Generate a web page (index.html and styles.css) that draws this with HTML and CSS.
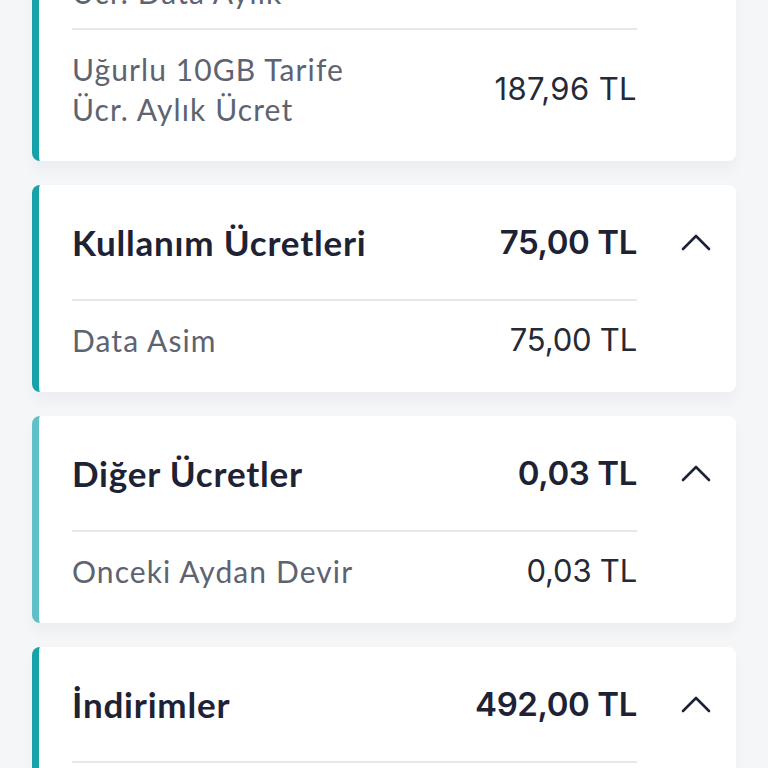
FILE: index.html
```html
<!DOCTYPE html>
<html lang="tr">
<head>
<meta charset="utf-8">
<title>Fatura Detayı</title>
<link rel="stylesheet" href="styles.css">
</head>
<body>
<div class="list">
  <section class="card">
    <div class="main">
      <div class="row"><span class="label">Uğurlu Data<br>Ücr. Data Aylık</span><span class="amount">0,00 TL</span></div>
      <div class="divider"></div>
      <div class="row"><span class="label">Uğurlu 10GB Tarife<br>Ücr. Aylık Ücret</span><span class="amount wide">187,96 TL</span></div>
    </div>
    <div class="side"></div>
  </section>

  <section class="card">
    <div class="main">
      <div class="head"><span class="title">Kullanım Ücretleri</span><span class="total">75,00 TL</span></div>
      <div class="divider"></div>
      <div class="row"><span class="label">Data Asim</span><span class="amount">75,00 TL</span></div>
    </div>
    <div class="side">
      <svg class="chev" width="30" height="18" viewBox="0 0 30 18"><polyline points="2,16 15,3 28,16" fill="none" stroke="#1d2235" stroke-width="2.6" stroke-linecap="round" stroke-linejoin="round"/></svg>
    </div>
  </section>

  <section class="card light">
    <div class="main">
      <div class="head"><span class="title">Diğer Ücretler</span><span class="total">0,03 TL</span></div>
      <div class="divider"></div>
      <div class="row"><span class="label">Onceki Aydan Devir</span><span class="amount">0,03 TL</span></div>
    </div>
    <div class="side">
      <svg class="chev" width="30" height="18" viewBox="0 0 30 18"><polyline points="2,16 15,3 28,16" fill="none" stroke="#1d2235" stroke-width="2.6" stroke-linecap="round" stroke-linejoin="round"/></svg>
    </div>
  </section>

  <section class="card">
    <div class="main">
      <div class="head"><span class="title">İndirimler</span><span class="total">492,00 TL</span></div>
      <div class="divider"></div>
      <div class="row"><span class="label">Uğurlu İndirim</span><span class="amount">-492,00 TL</span></div>
    </div>
    <div class="side">
      <svg class="chev" width="30" height="18" viewBox="0 0 30 18"><polyline points="2,16 15,3 28,16" fill="none" stroke="#1d2235" stroke-width="2.6" stroke-linecap="round" stroke-linejoin="round"/></svg>
    </div>
  </section>
</div>
</body>
</html>
```

FILE: styles.css
```css
html, body {
  margin: 0;
  padding: 0;
  background: #f5f6f8;
  overflow: hidden;
}
body {
  font-family: Lato, "Noto Sans", sans-serif;
}
.list {
  display: flex;
  flex-direction: column;
  gap: 24px;
  padding: 0 32px;
  margin-top: -87px;
}
.card {
  display: flex;
  background: #ffffff;
  border-left: 7px solid #17a1a8;
  border-radius: 8px;
  padding-left: 33px;
  box-shadow: 0 10px 14px rgba(30, 40, 60, 0.035);
}
.card.light {
  border-left-color: #5fc1c7;
}
.main {
  flex: 1;
  padding-bottom: 16px;
}
.side {
  width: 99px;
  flex: none;
  padding-top: 35px;
  box-sizing: border-box;
}
.chev {
  display: block;
  margin: 13px 0 0 44px;
}
.head {
  display: flex;
  justify-content: space-between;
  align-items: center;
  padding: 35px 0;
  line-height: 44px;
}
.title {
  font-size: 35px;
  font-weight: 700;
  color: #1d2235;
  letter-spacing: 0.8px;
}
.total {
  font-family: Inter, "Liberation Sans", sans-serif;
  font-size: 33px;
  font-weight: 600;
  color: #1d2235;
  letter-spacing: -0.4px;
}
.divider {
  height: 2px;
  background: #e6e8eb;
}
.row {
  display: flex;
  justify-content: space-between;
  align-items: center;
  padding: 19px 0 16px;
  line-height: 40px;
}
.label {
  font-size: 30px;
  color: #5d6370;
  letter-spacing: 1.1px;
}
.amount {
  font-family: Inter, "Liberation Sans", sans-serif;
  font-size: 31px;
  color: #262a36;
  letter-spacing: -0.2px;
}
.amount.wide {
  letter-spacing: 0.4px;
}
```
